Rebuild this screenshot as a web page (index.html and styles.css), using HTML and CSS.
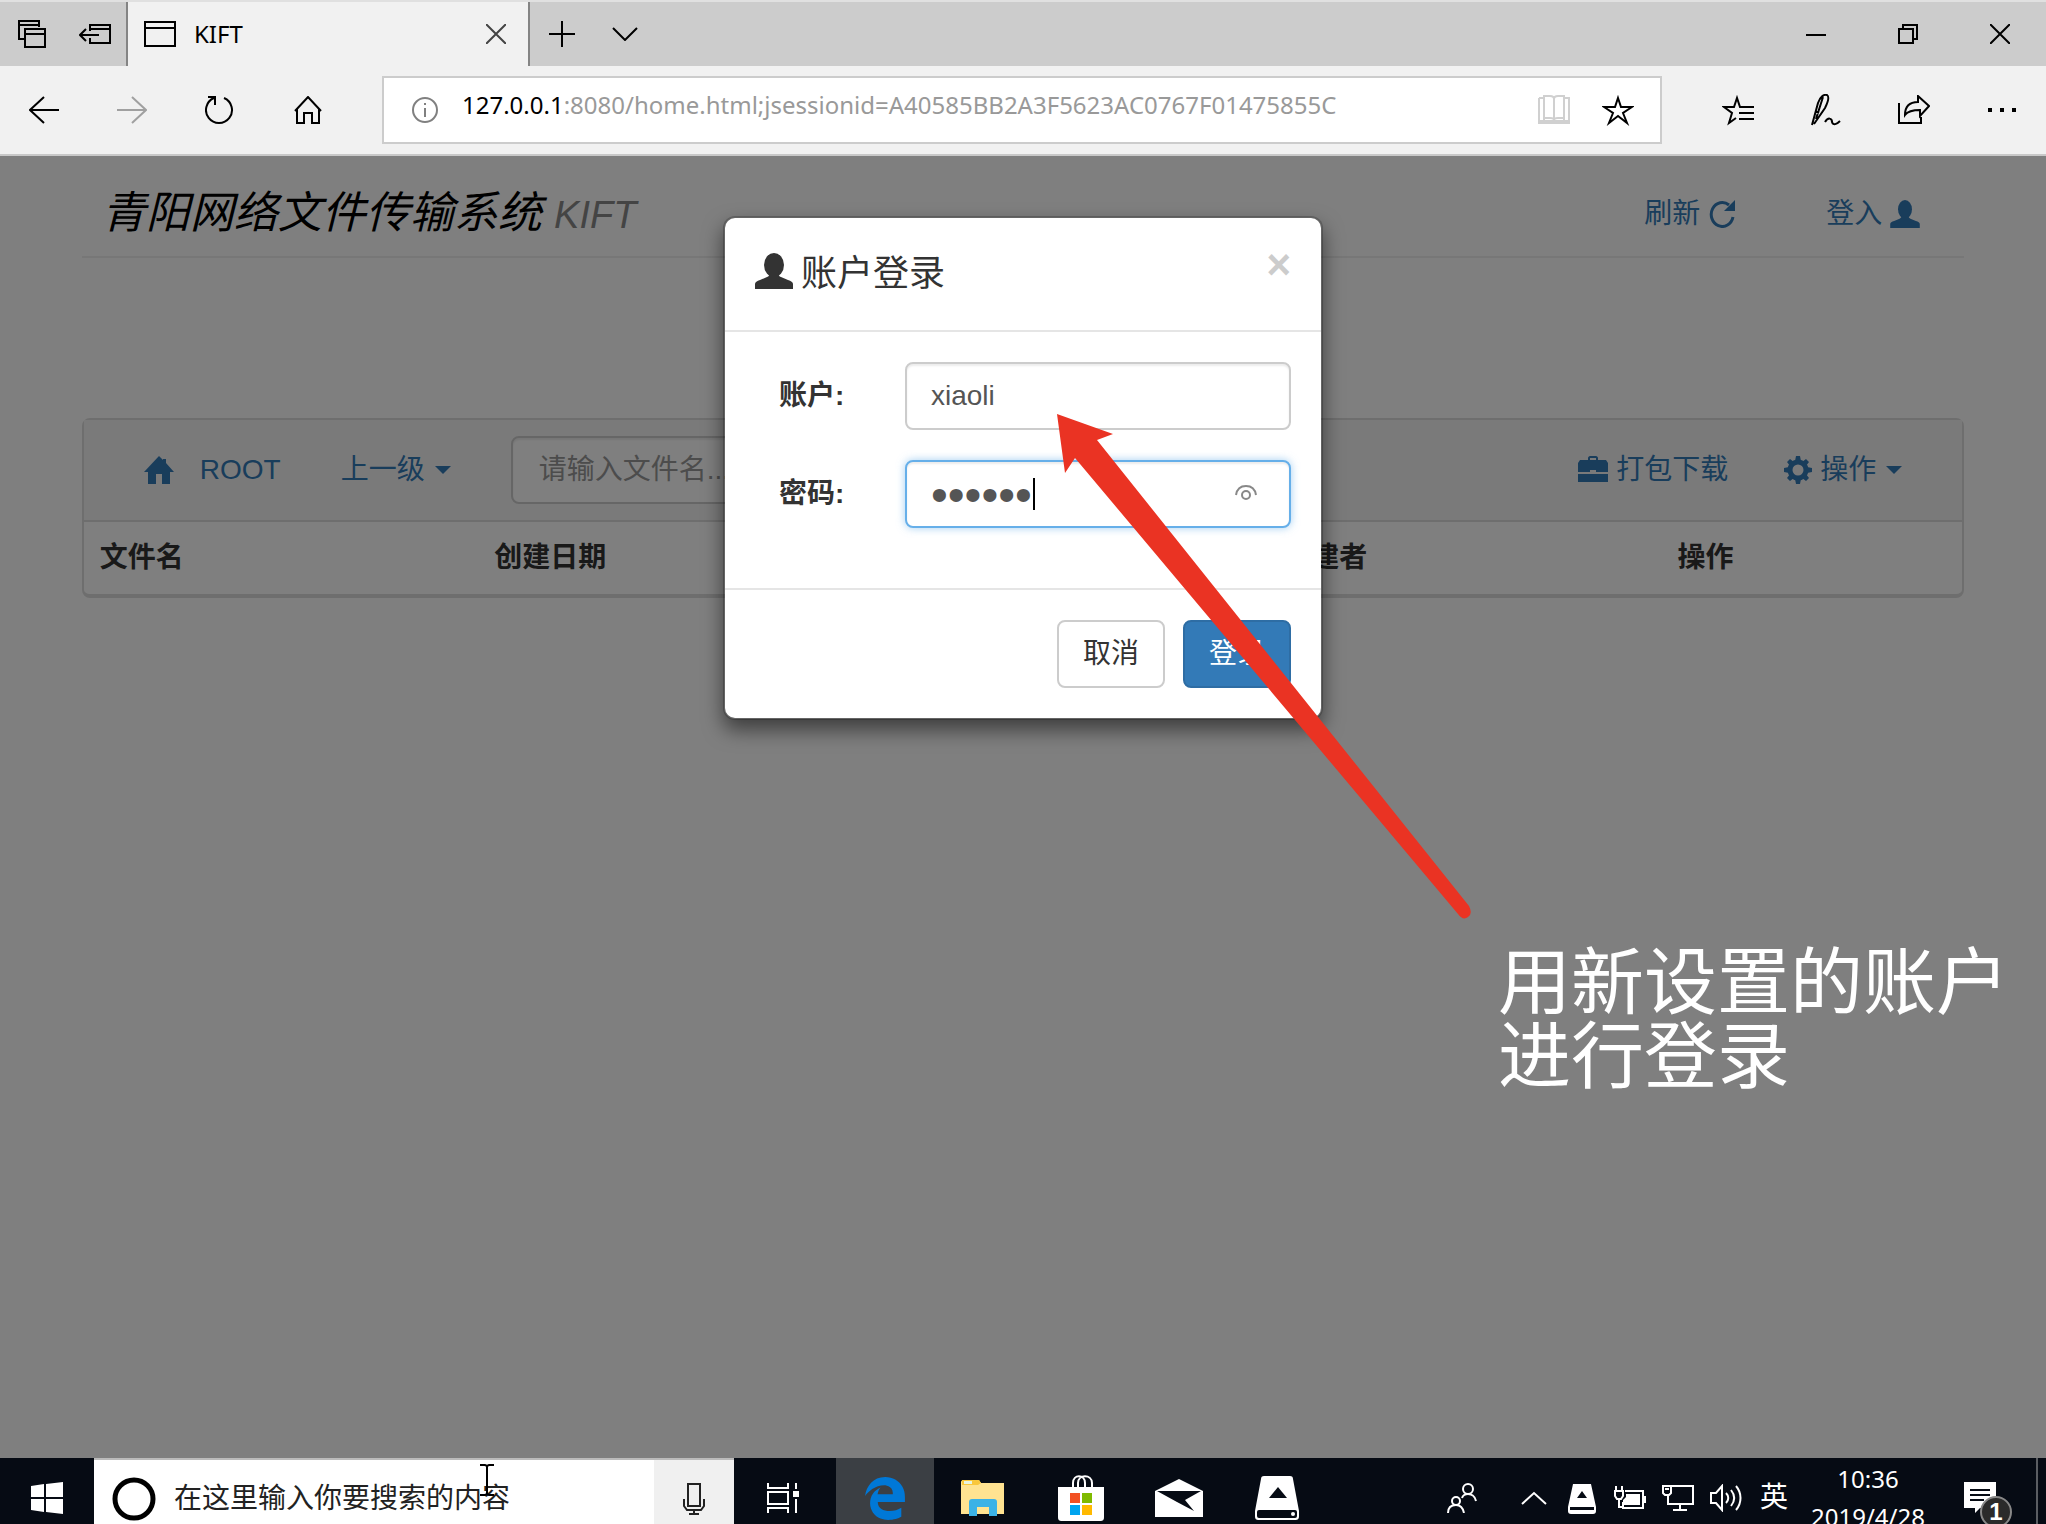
FILE: index.html
```html
<!DOCTYPE html>
<html lang="zh-CN">

<head>
    <meta charset="UTF-8">
    <meta name="viewport" content="width=device-width, initial-scale=1.0">
    <title>KIFT</title>
    <link rel="stylesheet" href="styles.css">
</head>

<body>

    <!-- browser tabs -->
    <div class="tab-bar">
        <button class="tab-tool" aria-label="Tabs you've set aside">
            <svg width="28" height="28" viewBox="0 0 28 28" class="line"><path d="M7 19H1V1h20v6M1 5h20M7 9h20v18H7zM7 14h20"/></svg>
        </button>
        <button class="tab-tool" aria-label="Set tabs aside">
            <svg width="32" height="20" viewBox="0 0 32 20" class="line"><path d="M11 7V1h20v18H11v-5M11 5h20M1 11h19M7 5l-6 6 6 6"/></svg>
        </button>
        <div class="tab">
            <svg width="32" height="26" viewBox="0 0 32 26" class="line"><path d="M1 1h30v24H1zM1 7h30"/></svg>
            <span class="tab-title">KIFT</span>
            <button class="tab-close" aria-label="Close tab">
                <svg width="20" height="20" viewBox="0 0 20 20" class="line"><path d="M0 0l20 20M20 0L0 20"/></svg>
            </button>
        </div>
        <button class="tab-tool" aria-label="New tab">
            <svg width="26" height="26" viewBox="0 0 26 26" class="line"><path d="M0 13h26M13 0v26"/></svg>
        </button>
        <button class="tab-tool" aria-label="Tab previews">
            <svg width="26" height="14" viewBox="0 0 26 14" class="line"><path d="M1 1l12 12L25 1"/></svg>
        </button>
        <div class="window-buttons">
            <button aria-label="Minimize">
                <svg width="20" height="20" viewBox="0 0 20 20" class="line"><path d="M0 11h20"/></svg>
            </button>
            <button aria-label="Restore">
                <svg width="20" height="20" viewBox="0 0 20 20" class="line"><path d="M1 5h14v14H1zM5 5V1h14v14h-4"/></svg>
            </button>
            <button aria-label="Close">
                <svg width="20" height="20" viewBox="0 0 20 20" class="line"><path d="M0 0l20 20M20 0L0 20"/></svg>
            </button>
        </div>
    </div>

    <!-- browser toolbar -->
    <div class="toolbar">
        <button class="tool" aria-label="Back">
            <svg width="30" height="28" viewBox="0 0 30 28" class="line"><path d="M30 14H1M15 1L1 14l14 13"/></svg>
        </button>
        <button class="tool disabled" aria-label="Forward">
            <svg width="30" height="28" viewBox="0 0 30 28" class="line"><path d="M0 14h29M15 1l14 13-14 13"/></svg>
        </button>
        <button class="tool" aria-label="Refresh">
            <svg width="30" height="30" viewBox="0 0 30 30" class="line"><path d="M19 3a13 13 0 1 1-10 0M3 2h7v8"/></svg>
        </button>
        <button class="tool" aria-label="Home">
            <svg width="28" height="28" viewBox="0 0 28 28" class="line"><path d="M1 15L14 1l13 14M3 13v14h7V17h8v10h7V13"/></svg>
        </button>
        <div class="address">
            <svg width="26" height="26" viewBox="0 0 26 26" class="line info"><circle cx="13" cy="13" r="12"/><path d="M13 11v9M13 6v2"/></svg>
            <div class="url"><span class="host">127.0.0.1</span>:8080/home.html;jsessionid=A40585BB2A3F5623AC0767F01475855C</div>
            <button aria-label="Reading view">
                <svg width="32" height="30" viewBox="0 0 32 30" class="line reader"><path d="M1 3h5M26 3h5v25H1V3M1 26h30M6 25V1h6c2 0 4 1 4 3v21c0-2-2-2-4-2H6M26 25V1h-6c-2 0-4 1-4 3M26 23h-6c-2 0-4 0-4 2"/></svg>
            </button>
            <button aria-label="Add to favorites">
                <svg width="32" height="32" viewBox="0 0 32 32" class="line"><path d="M16 4l3 9h11l-9 6 4 10-9-7-9 7 4-10-9-6h11z"/></svg>
            </button>
        </div>
        <button class="tool" aria-label="Favorites">
            <svg width="32" height="32" viewBox="0 0 32 32" class="line"><path d="M32 13H18l-3-9-3 9H2l8 6-3 10 7-5M17 19h15M17 25h15"/></svg>
        </button>
        <button class="tool" aria-label="Web note">
            <svg width="30" height="32" viewBox="0 0 30 32" class="line"><path d="M1 31L7 9c2-6 6-9 9-8 3 2 1 7-2 13L3 30M4 17l4 2M12 3L5 25M14 28c3-5 7-4 7 0 1 4 5 2 8-1"/></svg>
        </button>
        <button class="tool" aria-label="Share">
            <svg width="32" height="30" viewBox="0 0 32 30" class="line"><path d="M1 8v20h22v-6M7 20c0-9 5-13 13-13V1l11 10-9 10v-6c-7 0-12 1-15 5z"/></svg>
        </button>
        <button class="tool" aria-label="More">
            <svg width="28" height="4" viewBox="0 0 28 4"><path d="M0 0h4v4H0zM12 0h4v4h-4zM24 0h4v4h-4z"/></svg>
        </button>
    </div>

    <!-- page -->
    <div class="page">
        <div class="container">
            <div class="page-header">
                <h1>青阳网络文件传输系统 <small>KIFT</small></h1>
                <div class="header-links">
                    <a href="#">刷新
                        <svg width="28" height="28" viewBox="0 0 28 28"><path d="M25 17a11 12 0 1 1-4-12" fill="none" stroke="currentColor" stroke-width="3"/><path d="M27 0v11H16z"/></svg>
                    </a>
                    <a href="#">登入
                        <svg width="30" height="28" viewBox="0 0 38 36"><ellipse cx="19" cy="12" rx="9" ry="12"/><path d="M0 36v-5c0-2 2-3 5-4l7-3c3-1 3-4 2-6h10c-1 2-1 5 2 6l7 3c3 1 5 2 5 4v5z"/></svg>
                    </a>
                </div>
            </div>

            <div class="panel">
                <div class="panel-heading">
                    <a href="#" class="root">
                        <svg width="30" height="28" viewBox="0 0 30 28"><path d="M15 0l4 4V3h3v4l8 9h-4v12h-8V18h-6v10H4V16H0z"/></svg>
                        ROOT
                    </a>
                    <button class="menu">上一级 <span class="caret"></span></button>
                    <input type="text" class="form-control search" placeholder="请输入文件名..." aria-label="请输入文件名">
                    <div class="panel-actions">
                        <button class="menu">
                            <svg width="30" height="28" viewBox="0 0 30 28"><path d="M10 4V2c0-1 1-2 2-2h6c1 0 2 1 2 2v2h8l2 3v9H18v-2h-6v2H0V7l2-3zM12 4h6V2h-6zM0 18h30v8H0z"/></svg>打包下载
                        </button>
                        <button class="menu">
                            <svg width="28" height="28" viewBox="0 0 28 28"><circle cx="14" cy="14" r="8" fill="none" stroke="currentColor" stroke-width="5"/><path d="M12 0h4l1 5h-6zM12 28h4l1-5h-6zM0 12v4l5 1v-6zM28 12v4l-5 1v-6zM3 6l3-3 4 3-4 4zM25 6l-3-3-4 3 4 4zM3 22l3 3 4-3-4-4zM25 22l-3 3-4-3 4-4z"/></svg>操作 <span class="caret"></span>
                        </button>
                    </div>
                </div>
                <table>
                    <thead>
                        <tr>
                            <th>文件名</th>
                            <th>创建日期</th>
                            <th></th>
                            <th>创建者</th>
                            <th>操作</th>
                        </tr>
                    </thead>
                </table>
            </div>
        </div>

        <div class="backdrop"></div>

        <div class="modal">
            <form class="modal-content" id="login-form">
                <div class="modal-header">
                    <svg width="38" height="36" viewBox="0 0 38 36"><ellipse cx="19" cy="12" rx="10" ry="12"/><path d="M0 36v-5c0-2 2-3 5-4l7-3c3-1 3-4 2-6h10c-1 2-1 5 2 6l7 3c3 1 5 2 5 4v5z"/></svg>
                    <h4>账户登录</h4>
                    <button type="button" class="close" aria-label="Close">×</button>
                </div>
                <div class="modal-body">
                    <div class="form-group">
                        <label for="account">账户:</label>
                        <input type="text" id="account" class="form-control" value="xiaoli">
                    </div>
                    <div class="form-group">
                        <label for="password">密码:</label>
                        <div class="password-box">
                            <input type="password" id="password" class="form-control focused" value="123456">
                            <span class="text-caret"></span>
                            <svg class="reveal" width="22" height="16" viewBox="0 0 22 16"><path d="M1 10C2 4 6 1 11 1s9 3 10 9" fill="none" stroke="#888" stroke-width="2"/><circle cx="11" cy="10" r="4" fill="none" stroke="#888" stroke-width="2"/></svg>
                        </div>
                    </div>
                </div>
                <div class="modal-footer">
                    <button type="button" class="btn btn-default">取消</button>
                    <button type="button" class="btn btn-primary">登录</button>
                </div>
            </form>
        </div>

        <svg class="arrow" width="430" height="520" viewBox="0 0 430 520"><path d="M7 6l56 20-16 6 372 466q4 8-1 11-5 4-10-3L25 50l-10 15z" fill="#ea3323"/></svg>
        <p class="note">用新设置的账户<br>进行登录</p>
    </div>

    <!-- taskbar -->
    <div class="taskbar">
        <div class="taskbar-row">
            <button class="start" aria-label="Start">
                <svg width="32" height="32" viewBox="0 0 32 32"><path d="M0 4l13-2v13H0zM15 2l17-2v15H15zM0 17h13v13L0 28zM15 17h17v15l-17-2z"/></svg>
            </button>
            <div class="taskbar-search">
                <svg width="44" height="44" viewBox="0 0 44 44"><circle cx="22" cy="22" r="19" fill="none" stroke="#000" stroke-width="5"/></svg>
                <input type="text" placeholder="在这里输入你要搜索的内容" aria-label="搜索">
                <svg class="pointer" width="14" height="32" viewBox="0 0 14 32"><path d="M0 1h5l2 1 2-1h5M7 1v30M0 31h5l2-1 2 1h5" fill="none" stroke="#000" stroke-width="2"/></svg>
                <button class="mic" aria-label="Microphone">
                    <svg width="22" height="32" viewBox="0 0 22 32" class="line"><path d="M5 1h12v22H5zM1 16v7l3 4h14l3-4v-7M11 27v4M6 31h10"/></svg>
                </button>
            </div>
            <button class="task task-view" aria-label="Task view">
                <svg width="32" height="30" viewBox="0 0 32 30" class="line"><path d="M1 0v5h20V0M1 9h20v12H1zM1 30v-5h20v5M29 0v6M29 16v14"/><path d="M26 8h6v6h-6z" fill="#fff" stroke="none"/></svg>
            </button>
            <button class="task active" aria-label="Edge">
                <svg width="40" height="43" viewBox="25 8 462 497"><path fill="#0078d7" d="M486.29 243.67c0-44.03-7.76-84.46-28.81-122.4C416.5 47.88 343.91 8 258.89 8 119 7.72 40.62 113.21 26.06 227.68c42.42-61.31 117.07-121.38 220.37-125 0 0 109.67 0 99.42 105H170c6.37-37.39 18.55-59 34.34-78.93-75.05 34.9-121.85 96.1-120.75 188.32.83 71.45 50.13 144.84 120.75 172 83.35 31.84 192.77 7.2 240.13-21.33V363.31c-80.87 56.49-270.87 60.92-272.26-67.57h314.08z"/></svg>
            </button>
            <button class="task" aria-label="File Explorer">
                <svg width="44" height="36" viewBox="0 0 44 36"><path d="M0 34V2c0-1 1-2 2-2h16l2 3h23v31z" fill="#ffe391"/><path d="M1 0h17l2 3-3 2H1z" fill="#f9c73c"/><path d="M3 1h8v3H3z" fill="#e9f5e0"/><path d="M8 36V22c0-2 1-3 3-3h22c2 0 3 1 3 3v14h-8v-9H16v9z" fill="#3bb2e6"/></svg>
            </button>
            <button class="task" aria-label="Store">
                <svg width="46" height="46" viewBox="0 0 46 46"><path d="M15 13V8c0-9 12-9 12 0v5M20 13V8c0-9 14-9 14 0v5" fill="none" stroke="#fff" stroke-width="2"/><path d="M0 12h46v30c0 3-1 4-4 4H4c-3 0-4-1-4-4z" fill="#fff"/><path d="M12 18h10v10H12z" fill="#f25022"/><path d="M24 18h10v10H24z" fill="#7fba00"/><path d="M12 30h10v10H12z" fill="#00a4ef"/><path d="M24 30h10v10H24z" fill="#ffb900"/></svg>
            </button>
            <button class="task" aria-label="Mail">
                <svg width="48" height="38" viewBox="0 0 48 38"><path d="M0 12L24 0l24 12v26H0z" fill="#fff"/><path d="M2 12h44L30 21l9 11-17-9z" fill="#060b14"/></svg>
            </button>
            <button class="task" aria-label="Boot Camp">
                <svg width="46" height="44" viewBox="0 0 46 44"><path d="M7 3c0-2 1-3 3-3h26c2 0 3 1 3 3l6 32v5c0 3-1 4-4 4H5c-3 0-4-1-4-4v-5z" fill="#fff"/><path d="M15 22h18l-9-11z" fill="#060b14"/><rect x="3" y="34" width="40" height="8" rx="2" fill="#060b14"/><circle cx="39" cy="38" r="2" fill="#fff"/></svg>
            </button>
            <div class="tray">
                <button class="people" aria-label="People">
                    <svg width="30" height="30" viewBox="0 0 30 30" class="line"><circle cx="21" cy="6" r="5"/><circle cx="9" cy="18" r="4"/><path d="M15 15c1-3 3-4 6-4s7 2 8 7M1 30c0-5 3-8 8-8s7 3 8 8"/></svg>
                </button>
                <button aria-label="Show hidden icons">
                    <svg width="26" height="14" viewBox="0 0 26 14" class="line"><path d="M1 13L13 2l12 11"/></svg>
                </button>
                <button aria-label="Boot Camp">
                    <svg width="28" height="31" viewBox="0 0 28 31"><path d="M5 1h18l5 23v4c0 2-1 3-3 3H3c-2 0-3-1-3-3v-4z" fill="#fff"/><path d="M9 15h10l-5-7zM2 24h24v3H2z" fill="#060b14"/></svg>
                </button>
                <button aria-label="Battery">
                    <svg width="32" height="24" viewBox="0 0 32 24" class="line"><path d="M2 0v5M8 0v5M1 5h8v5l-2 3H3l-2-3zM5 13v8h4M11 5h18v17H9v-6M31 10v7"/><path d="M12 8h14v11H9v-5l3-3z" fill="#fff" stroke="none"/></svg>
                </button>
                <button aria-label="Network">
                    <svg width="32" height="26" viewBox="0 0 32 26" class="line"><path d="M10 1h21v18H6v-8M1 1h8v7l-2 2H3L1 8zM3 4h4M18 19v6M11 25h14"/></svg>
                </button>
                <button aria-label="Volume">
                    <svg width="32" height="28" viewBox="0 0 32 28" class="line"><path d="M1 9h5l6-7v24l-6-7H1zM16 9c3 3 3 7 0 10M21 6c4 5 4 11 0 16M26 2c6 7 6 17 0 24"/></svg>
                </button>
                <button class="ime">英</button>
                <div class="clock">
                    <span>10:36</span>
                    <span>2019/4/28</span>
                </div>
                <button class="notify" aria-label="Notifications">
                    <svg width="32" height="32" viewBox="0 0 32 32"><path d="M0 0h32v26H16l-5 5v-5H0z" fill="#fff"/><path d="M6 8h20M6 13h20M6 18h14" stroke="#060b14" stroke-width="2"/></svg>
                    <span class="badge">1</span>
                </button>
                <button class="show-desktop" aria-label="Show desktop"></button>
            </div>
        </div>
    </div>

</body>

</html>
```

FILE: styles.css
```css
* {
    box-sizing: border-box;
}

body {
    margin: 0;
    height: 100vh;
    display: flex;
    flex-direction: column;
    overflow: hidden;
    font-family: "Liberation Sans", "Noto Sans CJK SC", sans-serif;
    font-size: 28px;
    line-height: 40px;
    color: #333;
}

button {
    display: flex;
    align-items: center;
    justify-content: center;
    padding: 0;
    border: none;
    background: none;
    font: inherit;
    color: inherit;
    cursor: pointer;
}

a {
    color: #337ab7;
    text-decoration: none;
}

svg {
    flex: none;
    fill: currentColor;
}

.line {
    fill: none;
    stroke: currentColor;
    stroke-width: 2;
}

/* browser */
.tab-bar {
    flex: none;
    display: flex;
    height: 66px;
    border-top: 2px solid #e0e0e0;
    background-color: #ccc;
    color: #000;
}

.tab-tool {
    width: 63px;
}

.tab {
    width: 404px;
    display: flex;
    align-items: center;
    gap: 18px;
    padding: 0 22px 0 16px;
    border-left: 2px solid #848484;
    border-right: 2px solid #848484;
    background-color: #f1f1f1;
}

.tab-title {
    flex: 1;
    font-family: "Noto Sans", sans-serif;
    font-size: 24px;
}

.tab-close {
    color: #444;
}

.window-buttons {
    display: flex;
    margin-left: auto;
}

.window-buttons button {
    width: 92px;
}

.toolbar {
    flex: none;
    display: flex;
    padding: 10px 0;
    height: 90px;
    border-bottom: 2px solid #c8c8c8;
    background-color: #f1f1f1;
    color: #000;
}

.tool {
    width: 88px;
}

.tool.disabled {
    color: #a0a0a0;
}

.address {
    flex: 1;
    display: flex;
    align-items: center;
    gap: 32px;
    height: 68px;
    margin: 0 32px 0 30px;
    padding: 0 26px 0 28px;
    border: 2px solid #ccc;
    background-color: #fff;
}

.info {
    color: #808080;
}

.reader {
    color: #d0d0d0;
}

.url {
    flex: 1;
    margin-left: -8px;
    padding-bottom: 10px;
    font-family: "Noto Sans", sans-serif;
    font-size: 24px;
    color: #999;
    white-space: nowrap;
}

.host {
    color: #000;
}

/* page */
.page {
    position: relative;
    flex: 1;
    min-height: 0;
    background-color: #fff;
}

.container {
    padding: 0 4%;
}

.page-header {
    display: flex;
    align-items: center;
    justify-content: space-between;
    height: 102px;
    padding: 16px 44px 0 20px;
    border-bottom: 2px solid #eee;
}

.page-header h1 {
    margin: 0;
    font-size: 44px;
    font-weight: normal;
    font-style: italic;
    color: #000;
}

.page-header small {
    font-size: 38px;
    color: #888;
}

.header-links {
    display: flex;
    gap: 90px;
}

.header-links a {
    display: flex;
    align-items: center;
    gap: 8px;
}

.panel {
    margin-top: 160px;
    border: 2px solid #ddd;
    border-bottom-width: 4px;
    border-radius: 8px;
}

.panel-heading {
    display: flex;
    align-items: center;
    gap: 60px;
    padding: 16px 60px;
    border-bottom: 2px solid #ddd;
    background-color: #f5f5f5;
}

.root {
    display: flex;
    align-items: center;
    gap: 26px;
}

.menu {
    gap: 8px;
    color: #337ab7;
}

.caret {
    margin-left: 2px;
    border-top: 8px solid;
    border-left: 8px solid transparent;
    border-right: 8px solid transparent;
}

.form-control {
    width: 100%;
    height: 68px;
    padding: 12px 24px;
    border: 2px solid #ccc;
    border-radius: 8px;
    box-shadow: inset 0 2px 2px rgba(0, 0, 0, 0.08);
    background-color: #fff;
    font: inherit;
    color: #555;
}

.form-control::placeholder {
    color: #999;
}

.search {
    width: 360px;
    padding: 12px 26px;
}

.panel-actions {
    display: flex;
    gap: 56px;
    margin-left: auto;
}

table {
    width: 100%;
    table-layout: fixed;
    border-collapse: collapse;
}

th {
    width: 21%;
    padding: 16px;
    text-align: left;
}

th:last-child {
    width: 16%;
}

.backdrop {
    position: absolute;
    inset: 0;
    background-color: rgba(0, 0, 0, 0.5);
}

/* login dialog */
.modal {
    position: absolute;
    inset: 0;
    padding-top: 60px;
}

.modal-content {
    max-width: 600px;
    margin: 0 auto;
    border: 2px solid rgba(0, 0, 0, 0.2);
    border-radius: 12px;
    box-shadow: 0 10px 20px rgba(0, 0, 0, 0.5);
    background-color: #fff;
    background-clip: padding-box;
}

.modal-header {
    display: flex;
    align-items: center;
    gap: 8px;
    padding: 30px;
    border-bottom: 2px solid #e5e5e5;
}

.modal-header svg {
    margin-bottom: 6px;
}

.modal-header h4 {
    flex: 1;
    margin: 0;
    font-size: 36px;
    font-weight: normal;
    line-height: 52px;
}

.close {
    align-self: flex-start;
    font-size: 42px;
    line-height: 34px;
    font-weight: bold;
    color: #ccc;
}

.modal-body {
    padding: 30px;
}

.form-group {
    display: flex;
    align-items: center;
    margin-bottom: 30px;
}

.form-group label {
    flex: 0 0 150px;
    padding-left: 24px;
    font-weight: bold;
}

.password-box {
    position: relative;
    flex: 1;
}

/* bigger bullets */
#password {
    display: block;
    padding-top: 0;
    padding-bottom: 0;
    font-size: 48px;
}

.focused {
    border-color: #66afe9;
    outline: none;
    box-shadow: inset 0 2px 2px rgba(0, 0, 0, 0.08), 0 0 8px rgba(102, 175, 233, 0.6);
}

.text-caret {
    position: absolute;
    top: 18px;
    left: 128px;
    width: 2px;
    height: 32px;
    background-color: #000;
}

.reveal {
    position: absolute;
    top: 25px;
    right: 34px;
}

.modal-footer {
    display: flex;
    justify-content: flex-end;
    gap: 18px;
    padding: 30px;
    border-top: 2px solid #e5e5e5;
}

.btn {
    width: 108px;
    height: 68px;
    border: 2px solid #ccc;
    border-radius: 8px;
}

.btn-primary {
    border-color: #2e6da4;
    background-color: #337ab7;
    color: #fff;
}

/* annotation */
.arrow {
    position: absolute;
    top: 252px;
    left: 1050px;
}

.note {
    position: absolute;
    top: 790px;
    left: 1498px;
    margin: 0;
    font-size: 73px;
    line-height: 74px;
    color: #fff;
    white-space: nowrap;
}

/* taskbar */
.taskbar {
    flex: 0 0 66px;
    overflow: hidden;
    background-color: #060b14;
    color: #fff;
}

.taskbar-row {
    display: flex;
    height: 80px;
}

.start {
    width: 94px;
}

.taskbar-search {
    position: relative;
    display: flex;
    align-items: center;
    gap: 18px;
    width: 640px;
    padding-left: 18px;
    border-top: 2px solid #bbb;
    background-color: #fff;
    color: #222;
}

.taskbar-search input {
    flex: 1;
    min-width: 0;
    padding: 0;
    border: none;
    background: none;
    font: inherit;
}

.taskbar-search input::placeholder {
    color: #222;
}

.pointer {
    position: absolute;
    top: 4px;
    left: 386px;
}

.mic {
    align-self: stretch;
    width: 80px;
    background-color: #f0f0f0;
}

.task {
    width: 98px;
}

.task-view {
    margin-right: 4px;
}

.task.active {
    background-color: #3b3f44;
}

.tray {
    display: flex;
    margin-left: auto;
}

.tray button {
    width: 48px;
}

.tray .people {
    width: 96px;
}

.clock {
    display: flex;
    flex-direction: column;
    justify-content: center;
    width: 140px;
    font-family: "Noto Sans", sans-serif;
    font-size: 24px;
    line-height: 38px;
    text-align: center;
}

.tray .notify {
    position: relative;
    width: 98px;
    padding-right: 14px;
}

.badge {
    position: absolute;
    top: 38px;
    left: 42px;
    width: 32px;
    height: 32px;
    border: 2px solid #888;
    border-radius: 50%;
    background-color: #2b2b2b;
    font-size: 24px;
    line-height: 28px;
    font-weight: bold;
}

.tray .show-desktop {
    width: 10px;
    border-left: 2px solid #5a5d62;
}
```
